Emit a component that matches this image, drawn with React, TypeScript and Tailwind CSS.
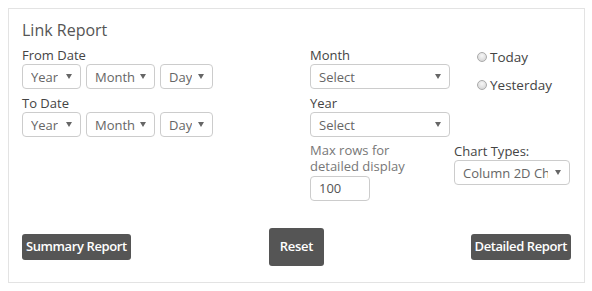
import React from 'react';

function Arrow() {
  return (
    <svg width="6" height="5" viewBox="0 0 6 5" className="shrink-0">
      <path d="M0 0h6L3 5z" fill="#666" />
    </svg>
  );
}

function FakeSelect({ label, width, textWidth }: { label: string; width: string; textWidth?: string }) {
  return (
    <div
      className={`${width} h-[25px] border border-[#ccc] rounded-[4px] bg-white flex items-center justify-between pl-[8px] pr-[8px] text-[13px] text-[#666]`}
    >
      <span className={`${textWidth ?? ''} overflow-hidden whitespace-nowrap leading-[18px]`}>{label}</span>
      <Arrow />
    </div>
  );
}

function Radio({ label }: { label: string }) {
  return (
    <label className="flex items-center gap-[3px] text-[13.5px] leading-[18px] text-[#444]">
      <span className="w-[10px] h-[10px] rounded-full border border-[#aaa] bg-[radial-gradient(circle_at_50%_35%,#f7f7f7,#cfcfcf)]" />
      {label}
    </label>
  );
}

export default function App() {
  const dateRows = ['From Date', 'To Date'];

  return (
    <div className="p-2 bg-white font-['Open_Sans',sans-serif]">
      <div className="w-[577px] h-[275px] border border-[#e3e3e3] pl-[13px] pr-[13px] pt-[9px] pb-[16px] flex flex-col">
        <h1 className="text-[16px] leading-6 text-[#555] font-normal">Link Report</h1>

        <div className="flex mt-[4px]">
          {/* date pickers */}
          <div className="w-[288px] flex flex-col gap-[5px]">
            {dateRows.map((row) => (
              <div key={row}>
                <div className="text-[13px] leading-[18px] text-[#444]">{row}</div>
                <div className="flex gap-[5px]">
                  <FakeSelect label="Year" width="w-[59px]" />
                  <FakeSelect label="Month" width="w-[69px]" />
                  <FakeSelect label="Day" width="w-[53px]" />
                </div>
              </div>
            ))}
          </div>

          {/* month / year */}
          <div className="w-[144px] flex flex-col gap-[5px]">
            <div>
              <div className="text-[13px] leading-[18px] text-[#444]">Month</div>
              <FakeSelect label="Select" width="w-[140px]" />
            </div>
            <div>
              <div className="text-[13px] leading-[18px] text-[#444]">Year</div>
              <FakeSelect label="Select" width="w-[140px]" />
            </div>
            <div>
              <div className="text-[13px] leading-[16px] text-[#777] w-[110px]">Max rows for detailed display</div>
              <div className="mt-[2px] w-[60px] h-[25px] border border-[#ccc] rounded-[4px] pl-[8px] flex items-center text-[13px] text-[#555]">
                100
              </div>
            </div>
          </div>

          {/* quick picks */}
          <div className="flex-1 flex flex-col">
            <div className="h-[96px] pl-[23px] pt-[2px] flex flex-col gap-[10px]">
              <Radio label="Today" />
              <Radio label="Yesterday" />
            </div>
            <div className="text-[13px] leading-[18px] text-[#444]">Chart Types:</div>
            <FakeSelect label="Column 2D Chart" width="w-[116px]" textWidth="w-[85px]" />
          </div>
        </div>

        <div className="mt-auto grid grid-cols-3 items-center">
          <button className="justify-self-start h-[26px] px-[4px] rounded-[3px] bg-[#555] text-white text-[13px] font-semibold tracking-[-0.4px]">
            Summary Report
          </button>
          <button className="justify-self-center h-[38px] w-[55px] rounded-[3px] bg-[#555] text-white text-[13px] font-semibold tracking-[-0.3px]">
            Reset
          </button>
          <button className="justify-self-end h-[26px] px-[4px] rounded-[3px] bg-[#555] text-white text-[13px] font-semibold tracking-[-0.4px]">
            Detailed Report
          </button>
        </div>
      </div>
    </div>
  );
}
